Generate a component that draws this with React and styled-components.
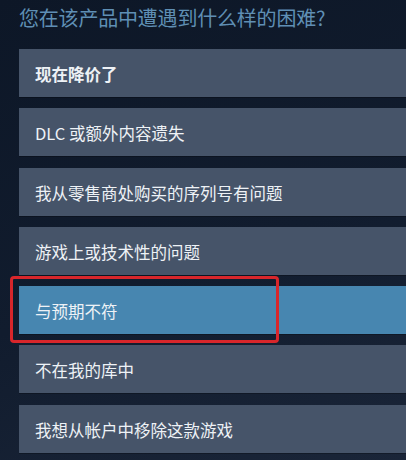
import React from "react";
import styled, { createGlobalStyle } from "styled-components";

const Global = createGlobalStyle`
  html, body { margin: 0; padding: 0; }
  body {
    width: 406px;
    height: 460px;
    overflow: hidden;
    background: linear-gradient(160deg, #0d1727 0%, #111c2e 55%, #1a2538 100%);
    font-family: "Noto Sans CJK SC", "Noto Sans", sans-serif;
  }
`;

const Page = styled.div`
  padding: 4px 0 0 19px;
  display: flex;
  flex-direction: column;
`;

const Title = styled.h2`
  margin: 0 0 17px 0;
  font-size: 20px;
  line-height: 28px;
  font-weight: 400;
  color: #5f8fb4;
  letter-spacing: -0.2px;
`;

const List = styled.div`
  display: flex;
  flex-direction: column;
  gap: 11.3px;
`;

const Option = styled.div`
  position: relative;
  height: 48px;
  display: flex;
  align-items: center;
  padding: 2px 0 0 16px;
  box-sizing: border-box;
  background: ${(p) => (p.$selected ? "#4786b0" : "#465469")};
  color: #eef2f6;
  font-size: 16.5px;
  font-weight: ${(p) => (p.$bold ? 700 : 400)};
  box-shadow: 0 1px 0 rgba(0, 0, 0, 0.25);

  ${(p) =>
    p.$marked &&
    `
    &::after {
      content: "";
      position: absolute;
      top: -10px;
      left: -9px;
      width: 269px;
      bottom: -9px;
      border: 3.5px solid #d8262b;
      border-radius: 4px;
      box-sizing: border-box;
      pointer-events: none;
    }
  `}
`;

const options = [
  { label: "现在降价了", bold: true },
  { label: "DLC 或额外内容遗失" },
  { label: "我从零售商处购买的序列号有问题" },
  { label: "游戏上或技术性的问题" },
  { label: "与预期不符", selected: true, marked: true },
  { label: "不在我的库中" },
  { label: "我想从帐户中移除这款游戏" },
];

export default function App() {
  return (
    <>
      <Global />
      <Page>
        <Title>您在该产品中遭遇到什么样的困难?</Title>
        <List>
          {options.map((o) => (
            <Option
              key={o.label}
              $bold={o.bold}
              $selected={o.selected}
              $marked={o.marked}
            >
              {o.label}
            </Option>
          ))}
        </List>
      </Page>
    </>
  );
}
